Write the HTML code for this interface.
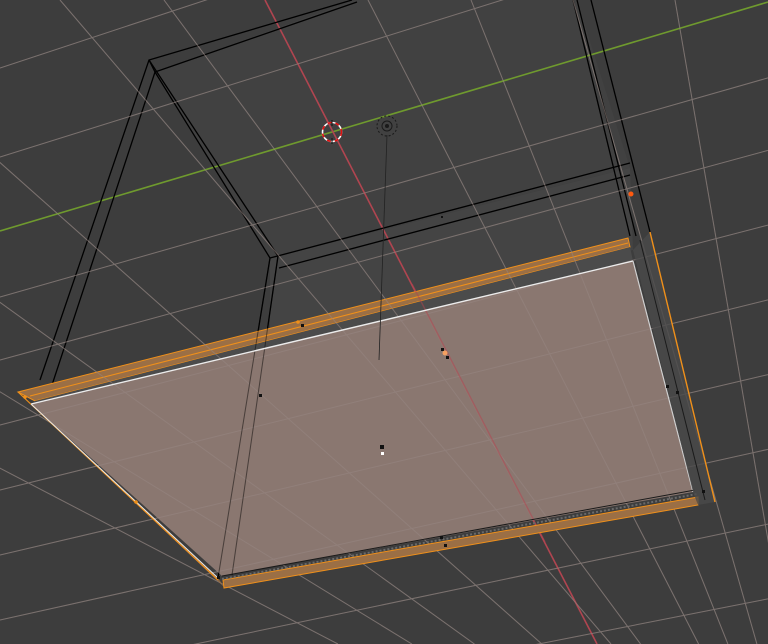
<!DOCTYPE html>
<html><head><meta charset="utf-8"><style>
html,body{margin:0;padding:0;background:#3d3d3d;overflow:hidden;width:768px;height:644px}
svg{display:block;overflow:hidden;position:absolute;left:0;top:0}
</style></head><body>
<svg id="s" width="768" height="644" viewBox="0 0 768 644" xmlns="http://www.w3.org/2000/svg">
<rect width="768" height="644" fill="#3d3d3d"/>
<polygon points="155,72 270,258 630,168 577,0 355,0" fill="#414141"/>
<polygon points="270,258 630,168 633,250 270,340" fill="#444"/>
<g id="grid" stroke="#545454" stroke-width="1" fill="none"></g>
<line x1="0" y1="231" x2="768" y2="2" stroke="#6f9a2e" stroke-width="1.6"/>
<line x1="265" y1="0" x2="597" y2="644" stroke="#b04550" stroke-width="1.6"/>
<g stroke="#000" stroke-width="1.3" fill="none">
<polyline points="352,0 149,60 40,380"/>
<polyline points="357,2 155,72 52,385"/>
<polyline points="149,60 155,72"/>
<polyline points="155,72 270,258 218,578"/>
<polyline points="149,60 278,256 232,575"/>
<line x1="270" y1="258" x2="630" y2="163"/>
<line x1="279" y1="268" x2="630" y2="175"/>
<line x1="573" y1="0" x2="630" y2="236"/>
<line x1="577" y1="0" x2="636" y2="236"/>
<line x1="591" y1="0" x2="650" y2="232"/>
</g>
<polygon points="18,392 628,238 630,247 35,401" fill="#9b6f45" stroke="#f0901a" stroke-width="1"/>
<line x1="30" y1="396" x2="628" y2="243" stroke="#f0901a" stroke-width="1"/>
<polygon points="35,401 630,247 633,261 31,404" fill="#4b4b4b"/>
<polygon points="31,404 633,261 693,492 222,576" fill="rgb(144,124,116)" fill-opacity="0.92"/>
<g id="grid2" stroke="#958580" stroke-width="1" fill="none" opacity="0.6"></g>
<line x1="412" y1="284" x2="545" y2="542" stroke="#b04550" stroke-width="1.4" opacity="0.5"/>
<g stroke="#000" stroke-width="1" fill="none" opacity="0.45">
<line x1="270" y1="258" x2="218" y2="578"/><line x1="278" y1="256" x2="232" y2="575"/>
</g>
<line x1="31" y1="404" x2="633" y2="261" stroke="#ececec" stroke-width="1.4"/>
<line x1="633" y1="261" x2="693" y2="492" stroke="#d0d0d0" stroke-width="1.2"/>
<polygon points="18,392 31,404 218,578 225,588" fill="#9b6f45" fill-opacity="0.8"/>
<line x1="18" y1="392" x2="218" y2="580" stroke="#f0901a" stroke-width="1.2"/>
<line x1="31" y1="404" x2="218" y2="578" stroke="#e8e8e8" stroke-width="1"/>
<polygon points="223,580 698,497 698,505 224,588" fill="#9b6f45" stroke="#f0901a" stroke-width="1"/>
<line x1="222" y1="576" x2="695" y2="490" stroke="#1a1a1a" stroke-width="1"/>
<line x1="222" y1="579" x2="697" y2="494" stroke="#6a6a6a" stroke-width="2" stroke-dasharray="2,2"/>
<polygon points="633,250 650,232 715,502 698,505 693,492" fill="#4a4a4a" fill-opacity="0.8"/>
<line x1="650" y1="232" x2="715" y2="502" stroke="#f0901a" stroke-width="1.4"/>
<line x1="640" y1="240" x2="705" y2="500" stroke="#1a1a1a" stroke-width="1"/>
<g fill="#111">
<rect x="301" y="324" width="3" height="3"/><rect x="259" y="394" width="3" height="3"/>
<rect x="441" y="348" width="3" height="3"/><rect x="446" y="356" width="3" height="3"/>
<rect x="380" y="445" width="4" height="4"/><rect x="666" y="385" width="3" height="3"/>
<rect x="676" y="391" width="3" height="3"/><rect x="440" y="536" width="3" height="3"/>
<rect x="444" y="544" width="3" height="3"/><rect x="702" y="490" width="3" height="3"/>
<rect x="217" y="576" width="3" height="3"/><rect x="441" y="216" width="2" height="2"/>
</g>
<rect x="381" y="452" width="3" height="3" fill="#fff"/>
<circle cx="445" cy="353" r="2.5" fill="#f5a060"/>
<circle cx="631" cy="194" r="2.5" fill="#ff5a10"/>
<circle cx="25" cy="397" r="1.8" fill="#f0901a"/>
<circle cx="136" cy="502" r="1.8" fill="#f0901a"/>
<circle cx="298" cy="322" r="1.8" fill="#f0901a"/>
<line x1="387" y1="135" x2="379" y2="360" stroke="#222" stroke-width="0.8"/>
<circle cx="387" cy="126" r="10" fill="none" stroke="#1a1a1a" stroke-width="1" stroke-dasharray="2,2"/>
<circle cx="387" cy="126" r="5" fill="none" stroke="#1a1a1a" stroke-width="1"/>
<circle cx="387" cy="126" r="2" fill="#1a1a1a"/>
<circle cx="332" cy="132" r="9.5" fill="none" stroke="#fff" stroke-width="1.6"/>
<circle cx="332" cy="132" r="9.5" fill="none" stroke="#e01010" stroke-width="1.6" stroke-dasharray="4,4"/>
<line x1="332" y1="120" x2="332" y2="126" stroke="#111"/>
<line x1="332" y1="138" x2="332" y2="144" stroke="#111"/>
</svg>
<script>
(function(){
var ns="http://www.w3.org/2000/svg";
var g=document.getElementById("grid"), g2=document.getElementById("grid2");
function L(p,x1,y1,x2,y2){var l=document.createElementNS(ns,"line");l.setAttribute("x1",x1);l.setAttribute("y1",y1);l.setAttribute("x2",x2);l.setAttribute("y2",y2);p.appendChild(l);}
var vx=830,vy=900;
var xs=[-900,-640,-420,-183,60,164,368,471,573,675,775,875,975];
xs.forEach(function(x0){var t=644/vy;var x2=x0+(vx-x0)*t;L(g,x0,0,x2,644);L(g2,x0,0,x2,644);});
var ys=[-110,-20,68,157,297,360,425,490,555,620,685,750,815,880];
ys.forEach(function(y){var yr=(y-231)*1.15+2;L(g,0,y,768,yr);L(g2,0,y,768,yr);});
})();
</script>
</body></html>
